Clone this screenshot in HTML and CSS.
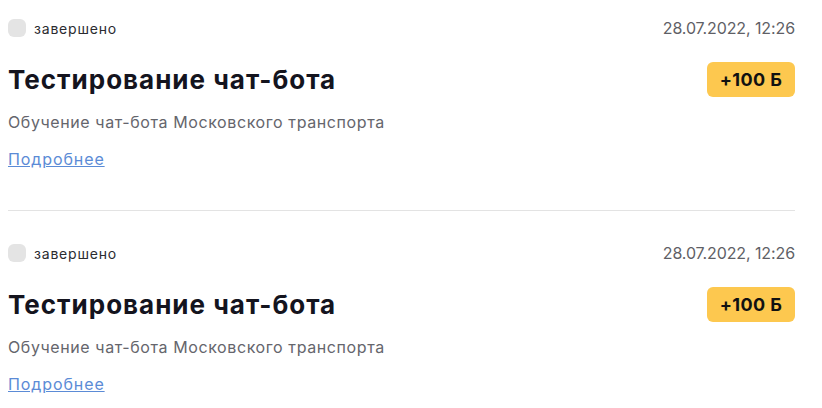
FILE: index.html
```html
<html>
  <head>
    <title>Задания</title>
    <link rel="stylesheet" href="styles.css">
  </head>
  <body>
    <div class="list">
      <div class="task">
        <div class="taskTop">
          <div class="status">
            <span class="statusBox"></span>
            <span class="statusText">завершено</span>
          </div>
          <div class="date">28.07.2022, 12:26</div>
        </div>
        <div class="taskHead">
          <h2 class="title">Тестирование чат-бота</h2>
          <span class="points">+100 Б</span>
        </div>
        <p class="descr">Обучение чат-бота Московского транспорта</p>
        <a class="more" href="#">Подробнее</a>
      </div>
      <div class="task">
        <div class="taskTop">
          <div class="status">
            <span class="statusBox"></span>
            <span class="statusText">завершено</span>
          </div>
          <div class="date">28.07.2022, 12:26</div>
        </div>
        <div class="taskHead">
          <h2 class="title">Тестирование чат-бота</h2>
          <span class="points">+100 Б</span>
        </div>
        <p class="descr">Обучение чат-бота Московского транспорта</p>
        <a class="more" href="#">Подробнее</a>
      </div>
    </div>
  </body>
</html>
```

FILE: styles.css
```css
body {
  margin: 0;
  background: #fff;
  font-family: Inter, "Noto Sans", sans-serif;
  color: #1a1a24;
}

.list {
  width: 787px;
  padding: 0 8px;
}

.task {
  padding-top: 19px;
  padding-bottom: 41px;
  border-bottom: 1px solid #e3e3e3;
  margin-bottom: 14px;
}

.taskTop {
  display: flex;
  justify-content: space-between;
  align-items: center;
  height: 18px;
}

.status {
  display: flex;
  align-items: center;
  gap: 8px;
}

.statusBox {
  width: 18px;
  height: 18px;
  border-radius: 6px;
  background: #e4e4e4;
}

.statusText {
  font-size: 14px;
  letter-spacing: 0.8px;
  color: #2b2b30;
}

.date {
  font-size: 16px;
  letter-spacing: -0.1px;
  color: #5f5f66;
}

.taskHead {
  display: flex;
  justify-content: space-between;
  align-items: center;
  margin-top: 25px;
  height: 35px;
}

.title {
  margin: 0;
  font-size: 26px;
  font-weight: 700;
  letter-spacing: 1px;
  color: #14141e;
}

.points {
  width: 88px;
  height: 35px;
  border-radius: 6px;
  background: #fdc84f;
  font-size: 18px;
  font-weight: 700;
  letter-spacing: 0.4px;
  color: #111;
  display: flex;
  align-items: center;
  justify-content: center;
}

.descr {
  margin: 15px 0 0;
  font-size: 16px;
  line-height: 20px;
  letter-spacing: 0.6px;
  color: #65656c;
}

.more {
  display: inline-block;
  margin-top: 17px;
  font-size: 16px;
  line-height: 20px;
  letter-spacing: 0.9px;
  color: #5b8bd6;
}
```
